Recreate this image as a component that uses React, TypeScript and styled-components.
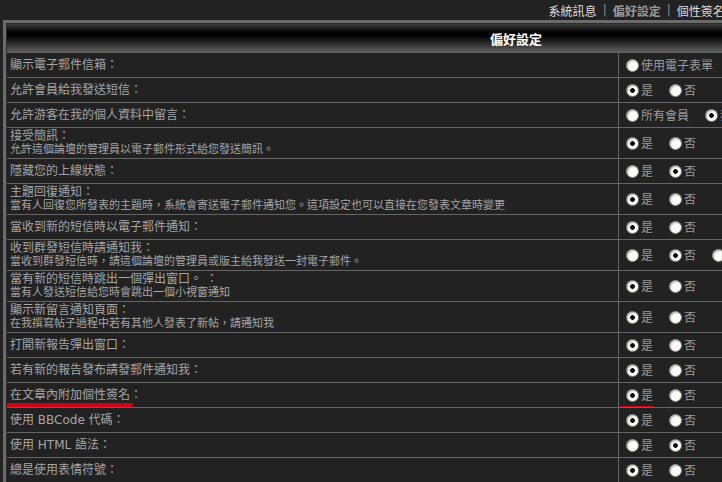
import React from 'react';
import styled, { createGlobalStyle, css } from 'styled-components';

const GlobalStyle = createGlobalStyle`
  html, body {
    margin: 0;
    background: #222222;
    overflow: hidden;
  }
  body {
    font-family: "DejaVu Sans", "Noto Sans CJK TC", sans-serif;
  }
`;

const Page = styled.div`
  width: 1028px;
  padding-left: 3px;
  box-sizing: border-box;
`;

const Nav = styled.nav`
  display: flex;
  justify-content: flex-end;
  align-items: center;
  height: 20px;
  padding-right: 71px;
  font-size: 12px;
  white-space: nowrap;
`;

const NavLink = styled.a<{ $active?: boolean }>`
  color: ${p => (p.$active ? '#9a9a9a' : '#dcdcdc')};
  font-weight: ${p => (p.$active ? 700 : 400)};
  text-decoration: none;
`;

const Sep = styled.span`
  color: #8a8a8a;
  margin: 0 6px;
`;

const Table = styled.div`
  border: 3px solid #6b6b6b;
  background: #2b2b2b;
  padding: 1px 0 0 1px;
`;

const Grid = styled.div`
  display: grid;
  grid-template-columns: 611px 406px;
  gap: 1px;
  background: #656565;
`;

const HeaderCell = styled.div`
  grid-column: 1 / -1;
  height: 28px;
  display: flex;
  align-items: center;
  justify-content: center;
  background: linear-gradient(#3c3c3c, #000 30%, #060606 45%, #5e5e5e);
  color: #ffffff;
  font-weight: 700;
  font-size: 13px;
`;

const LabelCell = styled.div<{ $tall?: boolean }>`
  background: #222222;
  height: ${p => (p.$tall ? 30 : 24)}px;
  box-sizing: border-box;
  padding: 0 3px;
  display: flex;
  flex-direction: column;
  justify-content: center;
  color: #a6a6a6;
  font-size: 12px;
  line-height: 13px;
  white-space: nowrap;
`;

const Desc = styled.span`
  font-size: 11px;
  line-height: 13px;
`;

const underline = css`
  &::after {
    content: '';
    position: absolute;
    height: 3px;
    background: #d30015;
    border-radius: 2px;
    box-shadow: 0 0 1px #a00010;
  }
`;

const Title = styled.span<{ $marked?: boolean }>`
  ${p =>
    p.$marked &&
    css`
      display: inline-block;
      position: relative;
      align-self: flex-start;
      ${underline}
      &::after {
        left: -3px;
        right: 9px;
        bottom: -5px;
        height: 4px;
      }
    `}
`;

const OptionCell = styled.div`
  background: #222222;
  display: flex;
  align-items: center;
  padding-left: 7px;
  white-space: nowrap;
  overflow: hidden;
`;

const Option = styled.label<{ $marked?: boolean }>`
  display: inline-flex;
  align-items: center;
  margin-right: 16px;
  color: #9c9c9c;
  font-size: 12px;
  line-height: 13px;
  position: relative;
  ${p =>
    p.$marked &&
    css`
      ${underline}
      &::after {
        left: -6px;
        right: -1px;
        bottom: -6px;
      }
    `}
`;

const OptionText = styled.span`
  margin-left: 2px;
  padding-top: 3px;
`;

const Radio = styled.input.attrs({ type: 'radio' })`
  appearance: none;
  margin: 0;
  width: 13px;
  height: 13px;
  box-sizing: border-box;
  border-radius: 50%;
  border: 1px solid #8e8e86;
  background: #fbfbf8;
  box-shadow: inset 1px 1px 1px #b8b8b0;
  &:checked {
    background: radial-gradient(circle, #000 0 2px, #fbfbf8 2.6px);
  }
`;

type Choice = { label: string; checked?: boolean };
type Row = { title: string; desc?: string; options: Choice[]; marked?: boolean };

const yesNo = (yes: boolean): Choice[] => [
  { label: '是', checked: yes },
  { label: '否', checked: !yes },
];

const rows: Row[] = [
  { title: '顯示電子郵件信箱：', options: [{ label: '使用電子表單' }, { label: '隱藏信箱' }] },
  { title: '允許會員給我發送短信：', options: yesNo(true) },
  {
    title: '允許游客在我的個人資料中留言：',
    options: [{ label: '所有會員' }, { label: '我的好友', checked: true }],
  },
  { title: '接受簡訊：', desc: '允許這個論壇的管理員以電子郵件形式給您發送簡訊。', options: yesNo(true) },
  { title: '隱藏您的上線狀態：', options: yesNo(false) },
  {
    title: '主題回復通知：',
    desc: '當有人回復您所發表的主題時，系統會寄送電子郵件通知您。這項設定也可以直接在您發表文章時變更',
    options: yesNo(true),
  },
  { title: '當收到新的短信時以電子郵件通知：', options: yesNo(true) },
  {
    title: '收到群發短信時請通知我：',
    desc: '當收到群發短信時，請這個論壇的管理員或版主給我發送一封電子郵件。',
    options: [{ label: '是' }, { label: '否', checked: true }, { label: '僅限版主' }],
  },
  { title: '當有新的短信時跳出一個彈出窗口。 ：', desc: '當有人發送短信給您時會跳出一個小視窗通知', options: yesNo(true) },
  { title: '顯示新留言通知頁面：', desc: '在我撰寫帖子過程中若有其他人發表了新帖，請通知我', options: yesNo(true) },
  { title: '打開新報告彈出窗口：', options: yesNo(true) },
  { title: '若有新的報告發布請發郵件通知我：', options: yesNo(true) },
  { title: '在文章內附加個性簽名：', options: yesNo(true), marked: true },
  { title: '使用 BBCode 代碼：', options: yesNo(true) },
  { title: '使用 HTML 語法：', options: yesNo(false) },
  { title: '總是使用表情符號：', options: yesNo(true) },
];

export default function App() {
  return (
    <Page>
      <GlobalStyle />
      <Nav>
        <NavLink href="#">系統訊息</NavLink>
        <Sep>|</Sep>
        <NavLink href="#" $active>偏好設定</NavLink>
        <Sep>|</Sep>
        <NavLink href="#">個性簽名</NavLink>
        <Sep>|</Sep>
        <NavLink href="#">頭像設定</NavLink>
        <Sep>|</Sep>
        <NavLink href="#">好友名單</NavLink>
        <Sep>|</Sep>
        <NavLink href="#">私人訊息</NavLink>
        <Sep>|</Sep>
        <NavLink href="#">登出</NavLink>
      </Nav>
      <Table>
        <Grid>
          <HeaderCell>偏好設定</HeaderCell>
          {rows.map((row, i) => (
            <React.Fragment key={i}>
              <LabelCell $tall={!!row.desc}>
                <Title $marked={row.marked}>{row.title}</Title>
                {row.desc && <Desc>{row.desc}</Desc>}
              </LabelCell>
              <OptionCell>
                {row.options.map((opt, j) => (
                  <Option key={j} $marked={row.marked && j === 0}>
                    <Radio name={`opt-${i}`} defaultChecked={!!opt.checked} />
                    <OptionText>{opt.label}</OptionText>
                  </Option>
                ))}
              </OptionCell>
            </React.Fragment>
          ))}
        </Grid>
      </Table>
    </Page>
  );
}
